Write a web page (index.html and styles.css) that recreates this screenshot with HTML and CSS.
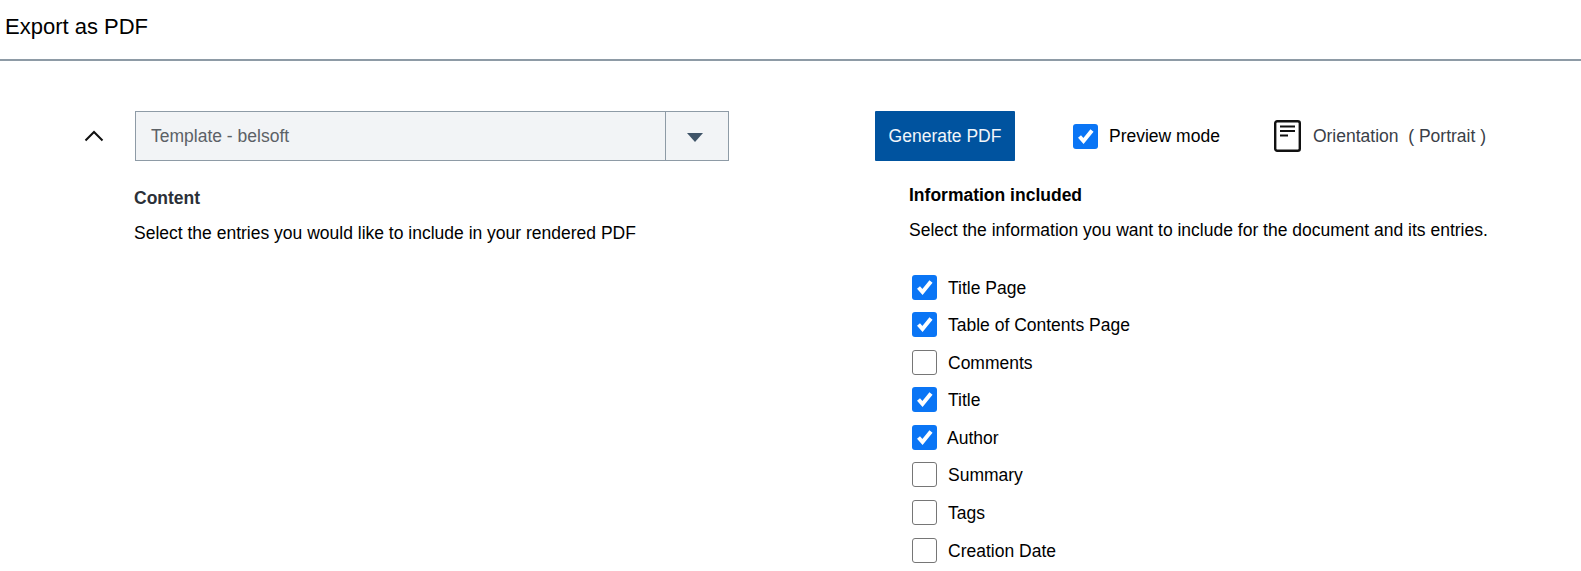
FILE: index.html
```html
<!DOCTYPE html>
<html lang="en">

<head>
    <meta charset="UTF-8">
    <meta name="viewport" content="width=device-width, initial-scale=1.0">
    <title>Export as PDF</title>
    <link rel="stylesheet" href="styles.css">
</head>

<body>
    <header class="page-header">
        <h1 class="page-title">Export as PDF</h1>
    </header>

    <main class="export">
        <section class="left-col">
            <div class="template-row">
                <button class="collapse-btn" type="button" aria-label="Collapse">
                    <svg width="20" height="12" viewBox="0 0 20 12" fill="none" stroke="#111" stroke-width="2">
                        <path d="M1.5 10.5L10 2l8.500 8.500" />
                    </svg>
                </button>
                <div class="select">
                    <span class="select-value">Template - belsoft</span>
                    <span class="select-arrow"><span class="arrow-down"></span></span>
                </div>
            </div>
            <div class="content-info">
                <h2 class="content-title">Content</h2>
                <p class="help-text">Select the entries you would like to include in your rendered PDF</p>
            </div>
        </section>

        <section class="right-col">
            <div class="toolbar">
                <button class="generate-btn" type="button">Generate PDF</button>
                <label class="check preview-check">
                    <span class="box checked">
                        <svg width="25" height="25" viewBox="0 0 25 25" fill="none" stroke="#fff" stroke-width="4">
                            <path d="M6.500 12.500l4 4.500L19 6.500" />
                        </svg>
                    </span>
                    Preview mode
                </label>
                <div class="orientation">
                    <svg width="27" height="32" viewBox="0 0 27 32" fill="none" stroke="#111">
                        <rect x="1.200" y="1.200" width="24.600" height="29.600" rx="2" stroke-width="2.400" />
                        <path d="M6 6.500h15M6 11h15M6 15.500h8" stroke-width="2.200" />
                    </svg>
                    <span>Orientation&nbsp; ( Portrait )</span>
                </div>
            </div>

            <div class="info">
                <h2 class="info-title">Information included</h2>
                <p class="help-text">Select the information you want to include for the document and its entries.</p>
                <ul class="check-list">
                    <li class="check">
                        <span class="box checked">
                            <svg width="25" height="25" viewBox="0 0 25 25" fill="none" stroke="#fff" stroke-width="4">
                                <path d="M6.500 12.500l4 4.500L19 6.500" />
                            </svg>
                        </span>
                        Title Page
                    </li>
                    <li class="check">
                        <span class="box checked">
                            <svg width="25" height="25" viewBox="0 0 25 25" fill="none" stroke="#fff" stroke-width="4">
                                <path d="M6.500 12.500l4 4.500L19 6.500" />
                            </svg>
                        </span>
                        Table of Contents Page
                    </li>
                    <li class="check"><span class="box"></span>Comments</li>
                    <li class="check">
                        <span class="box checked">
                            <svg width="25" height="25" viewBox="0 0 25 25" fill="none" stroke="#fff" stroke-width="4">
                                <path d="M6.500 12.500l4 4.500L19 6.500" />
                            </svg>
                        </span>
                        Title
                    </li>
                    <li class="check author">
                        <span class="box checked">
                            <svg width="25" height="25" viewBox="0 0 25 25" fill="none" stroke="#fff" stroke-width="4">
                                <path d="M6.500 12.500l4 4.500L19 6.500" />
                            </svg>
                        </span>
                        Author
                    </li>
                    <li class="check"><span class="box"></span>Summary</li>
                    <li class="check"><span class="box"></span>Tags</li>
                    <li class="check"><span class="box"></span>Creation Date</li>
                </ul>
            </div>
        </section>
    </main>
</body>

</html>
```

FILE: styles.css
```css
* {
    box-sizing: border-box;
}

html,
body {
    height: 571px;
    overflow: hidden;
}

body {
    margin: 0;
    background: #fff;
    color: #000;
    font-family: "Liberation Sans", Arial, sans-serif;
    font-size: 17.5px;
}

.page-header {
    height: 61px;
    padding: 14px 0 0 5px;
    border-bottom: 2px solid #8e9ba6;
}

.page-title {
    margin: 0;
    font-size: 22px;
    font-weight: 400;
    line-height: 26px;
}

.export {
    display: flex;
    padding-top: 50px;
}

.left-col {
    width: 875px;
    padding-left: 84px;
}

.template-row {
    display: flex;
    align-items: center;
}

.collapse-btn {
    display: flex;
    width: 51px;
    padding: 0;
    border: 0;
    background: none;
}

.select {
    display: flex;
    width: 594px;
    height: 50px;
    border: 1px solid #8e9ba6;
    background: #f2f4f6;
    color: #5c6166;
}

.select-value {
    flex: 1;
    padding-left: 15px;
    line-height: 48px;
}

.select-arrow {
    display: flex;
    align-items: center;
    justify-content: center;
    width: 63px;
    padding-right: 5px;
    border-left: 1px solid #8e9ba6;
}

.arrow-down {
    margin-top: 3px;
    border-top: 9px solid #3f5468;
    border-left: 8px solid transparent;
    border-right: 8px solid transparent;
}

.content-info {
    padding: 27px 0 0 50px;
}

.content-title {
    margin: 0 0 15px;
    color: #2b3038;
    font-size: 17.5px;
    line-height: 20px;
}

.help-text {
    margin: 0;
    line-height: 20px;
}

.right-col {
    flex: 1;
}

.toolbar {
    display: flex;
    align-items: center;
    height: 50px;
}

.generate-btn {
    width: 140px;
    height: 50px;
    padding: 0;
    border: 0;
    border-radius: 1px;
    background: #00539f;
    color: #f2f6fa;
    font-family: inherit;
    font-size: 17.5px;
}

.check {
    display: flex;
    align-items: center;
    gap: 11px;
}

.preview-check {
    margin-left: 58px;
}

.box {
    flex: none;
    width: 25px;
    height: 25px;
    border: 1px solid #767676;
    border-radius: 3px;
    background: #fff;
}

.box.checked {
    border: 0;
    background: #0a75f5;
}

.box svg {
    display: block;
}

.orientation {
    display: flex;
    align-items: center;
    gap: 12px;
    margin-left: 54px;
    color: #3a4048;
}

.info {
    padding: 24px 0 0 34px;
}

.info-title {
    margin: 0 0 15px;
    font-size: 17.5px;
    line-height: 20px;
}

.check-list {
    margin: 0;
    padding: 29.300px 0 0 3px;
    list-style: none;
}

.check-list .check {
    height: 37.570px;
}

.check-list .box {
    margin-bottom: 2px;
}

.check-list .author {
    gap: 10px;
}
```
